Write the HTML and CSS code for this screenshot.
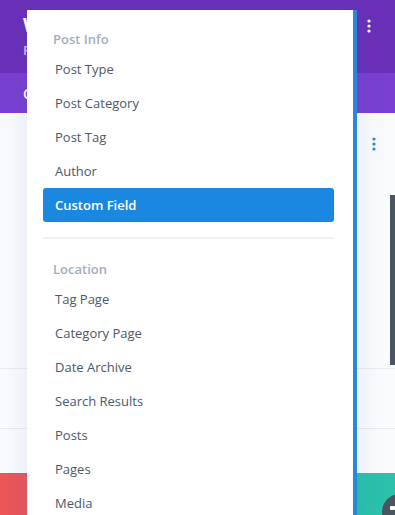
FILE: index.html
```html
<!DOCTYPE html>
<html>
<head>
<meta charset="utf-8">
<link rel="stylesheet" href="styles.css">
</head>
<body>
<div class="page">
  <header class="topbar">
    <div class="titles">
      <div class="title">Woo Layout</div>
      <div class="subtitle">Page Settings</div>
    </div>
    <svg class="dots" width="4" height="14" viewBox="0 0 4 14"><circle cx="2" cy="2" r="1.6"/><circle cx="2" cy="7" r="1.6"/><circle cx="2" cy="12" r="1.6"/></svg>
  </header>
  <nav class="tabs"><span class="tab">Content</span></nav>
  <main class="content">
    <section class="panel">
      <div class="panel-head">
        <svg class="dots blue" width="4" height="14" viewBox="0 0 4 14"><circle cx="2" cy="2" r="1.6"/><circle cx="2" cy="7" r="1.6"/><circle cx="2" cy="12" r="1.6"/></svg>
      </div>
      <div class="panel-body"><div class="darkbar"></div></div>
    </section>
    <div class="row"></div>
    <div class="row short"></div>
    <div class="tiles">
      <div class="tile red"></div>
      <div class="tile teal"><span class="fab"><span class="fab-icon"></span></span></div>
    </div>
  </main>

  <div class="dropdown">
    <div class="group-label">Post Info</div>
    <div class="item">Post Type</div>
    <div class="item">Post Category</div>
    <div class="item">Post Tag</div>
    <div class="item">Author</div>
    <div class="item active">Custom Field</div>
    <div class="divider"></div>
    <div class="group-label">Location</div>
    <div class="item">Tag Page</div>
    <div class="item">Category Page</div>
    <div class="item">Date Archive</div>
    <div class="item">Search Results</div>
    <div class="item">Posts</div>
    <div class="item">Pages</div>
    <div class="item">Media</div>
  </div>
</div>
</body>
</html>
```

FILE: styles.css
```css
* { box-sizing: border-box; }
html, body { margin: 0; padding: 0; }
body {
  width: 395px;
  height: 515px;
  overflow: hidden;
  font-family: "Open Sans", "Noto Sans", sans-serif;
  background: #f9fafc;
}
.page {
  position: relative;
  width: 395px;
  height: 515px;
  display: flex;
  flex-direction: column;
}
.topbar {
  height: 73px;
  background: #6b30b8;
  display: flex;
  justify-content: space-between;
  align-items: flex-start;
  padding: 14px 24px 0 23px;
}
.title {
  color: #fff;
  font-size: 20px;
  font-weight: 700;
  line-height: 22px;
}
.subtitle {
  color: #cdbde9;
  font-size: 13px;
  font-weight: 600;
  line-height: 16px;
  margin-top: 6px;
}
.dots { fill: #fff; margin-top: 5px; }
.dots.blue { fill: #2b87da; }
.tabs {
  height: 40px;
  background: #7a40cf;
  display: flex;
  align-items: center;
  padding-left: 23px;
}
.tab { color: #fff; font-size: 14px; font-weight: 600; }
.content {
  flex: 1;
  display: flex;
  flex-direction: column;
  background: #fafbfd;
}
.panel { height: 255px; display: flex; flex-direction: column; }
.panel-head {
  height: 82px;
  display: flex;
  justify-content: flex-end;
  align-items: flex-start;
  padding: 19px 19px 0 0;
}
.panel-body { flex: 1; display: flex; justify-content: flex-end; align-items: flex-start; }
.darkbar { width: 5px; height: 170px; background: #4a5562; }
.row { height: 60px; border-top: 1px solid #e8ecf1; }
.row.short { height: 45px; }
.tiles { flex: 1; display: flex; justify-content: space-between; }
.tile { width: 60px; }
.tile.red { background: linear-gradient(90deg, #ef5656, #de5868); }
.tile.teal { background: #2bc1ab; width: 80px; position: relative; overflow: hidden; }
.fab {
  position: absolute;
  left: 67px;
  top: 21px;
  width: 36px;
  height: 36px;
  border-radius: 50%;
  background: #4a5562;
}
.fab-icon {
  position: absolute;
  left: 8px;
  top: 12px;
  width: 5px;
  height: 4px;
  background: #fff;
  border-radius: 1px;
}
.dropdown {
  position: absolute;
  left: 27px;
  top: 10px;
  width: 330px;
  height: 520px;
  background: #fff;
  border-right: 4px solid #2b87da;
  padding: 16px 19px 0 16px;
  box-shadow: 0 0 28px rgba(40, 90, 170, 0.12);
}
.group-label {
  height: 26px;
  line-height: 26px;
  padding-left: 10px;
  font-size: 13px;
  font-weight: 600;
  color: #a3aebd;
}
.item {
  height: 34px;
  line-height: 34px;
  padding-left: 12px;
  font-size: 13px;
  color: #4c5866;
  border-radius: 3px;
}
.item.active {
  background: #1a88e0;
  color: #fff;
  font-weight: 600;
}
.divider {
  height: 17px;
  border-bottom: 2px solid #eef2f6;
  margin-bottom: 17px;
}
```
